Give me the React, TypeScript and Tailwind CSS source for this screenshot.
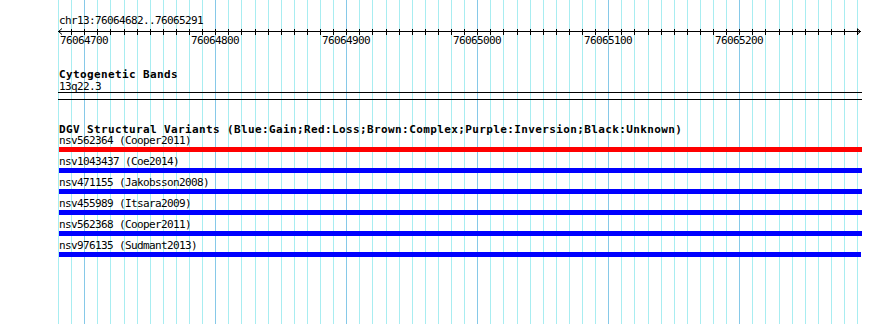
import React from 'react';

// region shown: chr13:76064682..76065291, 1.31 px per bp
const START = 76064682;
const PX_PER_BP = 1.31;
const X0 = 60.7;

const toX = (pos: number) => X0 + (pos - START) * PX_PER_BP;

// grid every 10 bp from 76064680 to 76065290
const gridPositions = Array.from({ length: 62 }, (_, k) => 76064680 + k * 10);
const labels = [76064700, 76064800, 76064900, 76065000, 76065100, 76065200];

type Variant = { id: string; study: string; color: string; width: string };

const variants: Variant[] = [
  { id: 'nsv562364', study: 'Cooper2011', color: 'bg-[#ff0000]', width: 'w-[803px]' },
  { id: 'nsv1043437', study: 'Coe2014', color: 'bg-[#0000ff]', width: 'w-[803px]' },
  { id: 'nsv471155', study: 'Jakobsson2008', color: 'bg-[#0000ff]', width: 'w-[803px]' },
  { id: 'nsv455989', study: 'Itsara2009', color: 'bg-[#0000ff]', width: 'w-[803px]' },
  { id: 'nsv562368', study: 'Cooper2011', color: 'bg-[#0000ff]', width: 'w-[803px]' },
  { id: 'nsv976135', study: 'Sudmant2013', color: 'bg-[#0000ff]', width: 'w-[802px]' },
];

const small = "font-['DejaVu_Sans_Mono','Liberation_Mono',monospace] text-[11px] leading-[11px] tracking-[-0.62px] text-black whitespace-pre";
const bold = "font-['DejaVu_Sans_Mono','Liberation_Mono',monospace] text-[11px] leading-[11px] font-bold tracking-[0.38px] text-black whitespace-pre";

function Grid() {
  return (
    <div className="absolute inset-0">
      {gridPositions.map((p) => {
        const major = p % 100 === 0;
        return (
          <div
            key={p}
            className={`absolute top-0 bottom-0 w-px ${major ? 'bg-[#86c9e8]' : 'bg-[#a8edf1]'}`}
            style={{ left: Math.round(toX(p)) }}
          />
        );
      })}
    </div>
  );
}

function Ruler() {
  const ticks = gridPositions.slice(1);
  return (
    <div className="relative mt-[2px] h-[18px]">
      <svg width={890} height={7} className="block">
        <line x1={58} y1={3.5} x2={861} y2={3.5} stroke="#000" strokeWidth={1} />
        {ticks.map((p) => {
          const x = Math.round(toX(p)) + 0.5;
          return <line key={p} x1={x} y1={1} x2={x} y2={7} stroke="#000" strokeWidth={1} />;
        })}
        <polyline points="62,0.5 58.5,3.5 62,6.5" fill="none" stroke="#000" strokeWidth={1} />
        <polyline points="857,0.5 860.5,3.5 857,6.5" fill="none" stroke="#000" strokeWidth={1} />
      </svg>
      {labels.map((p) => (
        <span
          key={p}
          className={`absolute top-[7px] h-[11px] ${small}`}
          style={{ left: Math.round(toX(p)) - 24 }}
        >
          {p}
        </span>
      ))}
    </div>
  );
}

export default function App() {
  return (
    <div className="relative h-[324px] w-[890px] overflow-hidden bg-white">
      <Grid />
      <div className="relative pt-[15px]">
        <div className={`pl-[59px] h-[11px] ${small}`}>chr13:76064682..76065291</div>
        <Ruler />

        {/* cytogenetic bands track */}
        <div className="mt-[23px] pl-[59px]">
          <div className={`h-[11px] ${bold}`}>Cytogenetic Bands</div>
          <div className={`mt-px h-[11px] ${small}`}>13q22.3</div>
          <div className="-ml-px h-[8px] w-[804px] border-y border-black" />
        </div>

        {/* DGV track */}
        <div className="mt-[24px] pl-[59px]">
          <div className={`h-[10px] ${bold} leading-[10px]`}>
            DGV Structural Variants (Blue:Gain;Red:Loss;Brown:Complex;Purple:Inversion;Black:Unknown)
          </div>
          <div className="mt-px flex flex-col gap-[4px]">
            {variants.map((v) => (
              <div key={v.id} className="flex flex-col gap-px">
                <div className={`h-[11px] ${small}`}>
                  {v.id} ({v.study})
                </div>
                <div className={`h-[5px] ${v.width} ${v.color}`} />
              </div>
            ))}
          </div>
        </div>
      </div>
    </div>
  );
}
